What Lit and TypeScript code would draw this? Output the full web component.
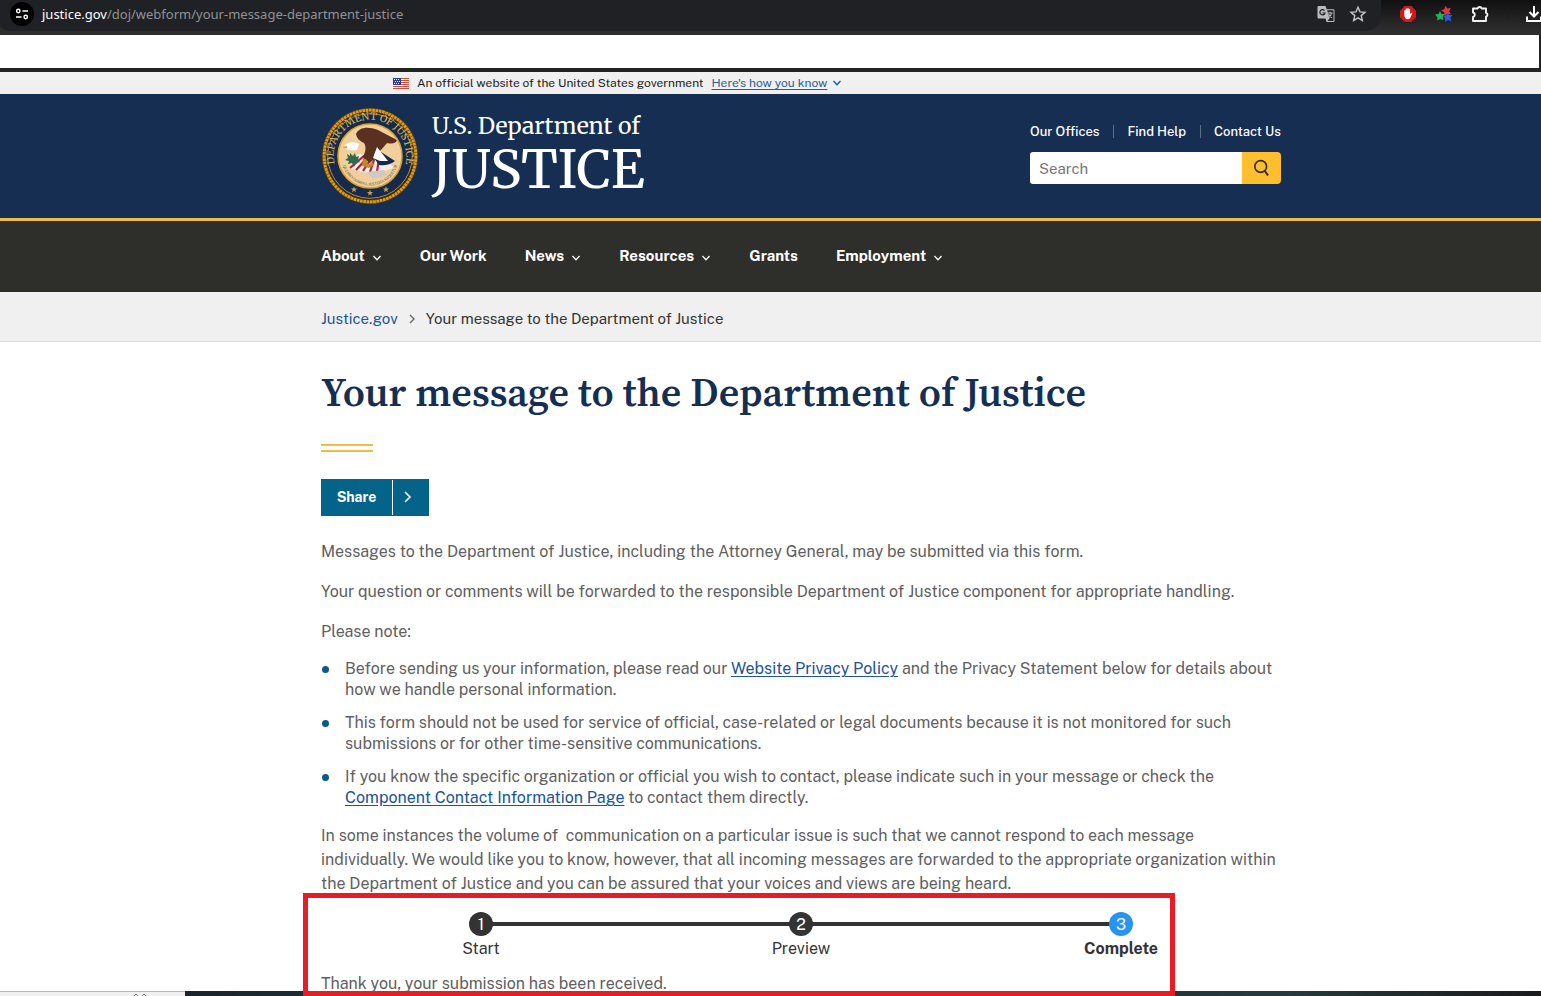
import { LitElement, html, css, svg } from "lit";
import { customElement } from "lit/decorators.js";

const chevronDown = html`<svg class="chev" width="10" height="8" viewBox="0 0 10 8" aria-hidden="true">
  <path d="M1.5 2 5 5.7 8.5 2" fill="none" stroke="currentColor" stroke-width="1.3" /></svg>`;

@customElement("browser-bar")
export class BrowserBar extends LitElement {
  static styles = css`
    :host {
      display: flex;
      height: 35px;
      background: linear-gradient(#101010, #2e2e2f 90%);
      font-family: "Noto Sans", sans-serif;
      font-size: 13px;
      overflow: hidden;
    }
    .omnibox {
      flex: 1;
      display: flex;
      align-items: center;
      height: 27px;
      padding: 0 14px 4px 10px;
      margin-left: -2px;
      background: #202124;
      border-radius: 0 0 16px 12px;
      color: #8f9296;
      white-space: nowrap;
    }
    .site {
      width: 24px;
      height: 24px;
      border-radius: 50%;
      background: #000;
      margin: 0 8px 0 2px;
    }
    .url { flex: 1; }
    .url b { color: #fff; font-weight: 400; }
    .omnibox svg { flex: none; }
    .tools { display: flex; gap: 14px; }
    .extensions {
      flex: none;
      display: flex;
      align-items: center;
      gap: 18px;
      height: 28px;
      width: 142px;
      padding-left: 18px;
    }
    .extensions svg { flex: none; }
    .rule { flex: none; width: 1px; height: 10px; background: #1b1b1b; margin-right: -1px; }
  `;
  render() {
    return html`
      <div class="omnibox">
        <svg class="site" viewBox="0 0 24 24" fill="none" stroke="#fff" stroke-width="1.4">
          <circle cx="8.3" cy="9" r="1.7" /><path d="M12.5 9H18M6 15h5.5" /><circle cx="15.7" cy="15" r="1.7" />
        </svg>
        <span class="url"><b>justice.gov</b>/doj/webform/your-message-department-justice</span>
        <span class="tools">
          <svg width="18" height="18" viewBox="0 0 18 18">
            <path d="M1.5 1h7l1.2 3.3h6.8a1 1 0 0 1 1 1V16a1 1 0 0 1-1 1H9.6L8.5 13.6h-7a1 1 0 0 1-1-1V2a1 1 0 0 1 1-1z" fill="#b9bbbe" />
            <path d="M10.2 5.3h6.3v10.6h-6l2-2.4z" fill="#202124" />
            <path d="M7.5 5.6A2.6 2.6 0 1 0 8 8H5.6" fill="none" stroke="#202124" stroke-width="1.2" />
            <path d="M10.5 8h5.2M13 6.8V8M11.3 12.8c2-1.2 3-2.8 3.2-4.7M11.5 9.3c.7 1.5 1.9 2.6 3.6 3.4" fill="none" stroke="#b9bbbe" stroke-width="1.1" />
          </svg>
          <svg width="18" height="18" viewBox="0 0 18 18">
            <path d="M9 2.3l2 4.6 5 .4-3.8 3.3 1.15 4.9L9 12.9l-4.35 2.6L5.8 10.6 2 7.3l5-.4z" fill="none" stroke="#c4c6c9" stroke-width="1.4" />
          </svg>
        </span>
      </div>
      <div class="extensions">
        <svg width="18" height="18" viewBox="0 0 18 18">
          <path d="M5.7 1h6.6L17 5.7v6.6L12.3 17H5.7L1 12.3V5.700z" fill="#d3181c" />
          <path d="M5.3 9.500V5.600a.7.7 0 0 1 1.400 0V4.200a.7.7 0 0 1 1.500 0v-.5a.7.7 0 0 1 1.500 0v.7a.7.7 0 0 1 1.400 0v5l1-1.300c.5-.6 1.400-.1 1.100.5l-1.700 3.700c-.5 1.300-1.200 2-2.600 2-2.600 0-3.600-1.800-3.600-4.800z" fill="#fff" />
        </svg>
        <svg width="18" height="18" viewBox="0 0 18 18">
          <path d="M10.500 .5l1.700 2.900 3.600-.3-1.600 3.100 1.700 3.100-3.700-.6L9.500 10.700l-.4-3.400L6 5.400l3.400-1.300z" fill="#e0334c" />
          <path d="M5 6l1.500 2.900 3.300.1-2.100 2.700.9 3.400-3.300-1.200-3.100 1.700.2-3.400L0 9.600l3.500-.6z" fill="#1fb257" />
          <path d="M12.700 7.200l1.400 2.800 3.300.1-2 2.700 1 3.600-3.300-1.300-3.100 1.900.2-3.600L8 10.900l3.400-.6z" fill="#3557e0" />
        </svg>
        <svg width="18" height="18" viewBox="0 0 18 18">
          <path d="M2 3.500h4.700a2 2 0 0 1 3.900 0H15v4.400a1.900 1.900 0 0 1 0 3.700V16H2v-4a2.300 2.300 0 0 0 0-4.500z" fill="none" stroke="#f2f2f2" stroke-width="1.900" stroke-linejoin="round" />
        </svg>
        <span class="rule"></span>
        <svg width="18" height="18" viewBox="0 0 18 18">
          <path d="M9 1v10M4.500 7L9 11.500 13.500 7M2 11.500V16h14v-4.500" fill="none" stroke="#fff" stroke-width="2" />
        </svg>
      </div>`;
  }
}

@customElement("doj-seal")
export class DojSeal extends LitElement {
  static styles = css`
    :host { display: block; width: 96px; height: 96px; }
    .ring { font: 10px "Merriweather", "Liberation Serif", serif; fill: #d9b45c; }
    .motto { font: 4px "Liberation Serif", serif; fill: #4d4433; }
  `;
  render() {
    return html`<svg width="96" height="96" viewBox="0 0 96 96" role="img" aria-label="Department of Justice seal">
      <defs>
        <path id="top" d="M14.700 62.500A36.300 36.300 0 1 1 81.300 62.500" />
        <path id="bottom" d="M19.500 49A28.500 28.500 0 0 0 76.500 49" />
        <clipPath id="disc"><circle cx="48" cy="48" r="31" /></clipPath>
      </defs>
      <circle cx="48" cy="48" r="48" fill="#6b4310" />
      <circle cx="48" cy="48" r="45.800" fill="none" stroke="#d99c1e" stroke-width="3" stroke-dasharray="2.600 .7" />
      <circle cx="48" cy="48" r="43.500" fill="#152a4c" stroke="#3a2a14" stroke-width="1.500" />
      <circle cx="48" cy="48" r="42.300" fill="none" stroke="#c9962d" stroke-width=".9" />
      <circle cx="48" cy="48" r="32" fill="#f0cf9c" stroke="#dba32c" stroke-width="1.600" />
      <text class="ring"><textPath href="#top" startOffset="50%" text-anchor="middle">DEPARTMENT OF JUSTICE</textPath></text>
      <g clip-path="url(#disc)">
        <path d="M27 60l9-14 26 2 10 12-14 4-14 1z" fill="#f4eee8" />
        <path d="M28 60l15-13M34 62l13-14M41 63l9-14M48 64l5-15M55 64l2-14" stroke="#b5203c" stroke-width="2.200" />
        <path d="M50 47l9-3 14 9c-5 4-11 5-16 4z" fill="#162a50" />
        <path d="M44 64l7 7 14-4-3-5z" fill="#cfc9c4" />
        <path d="M34 26c3-7 12-8 22-4l19 10c-1 4-6 4-10 3-4 5-8 8-9 12l-8 8-7-5c2-6 4-10 1-15-4-2-7-4-8-9z" fill="#5c3020" />
        <path d="M51 50l4-11 11 14-8 0z" fill="#fff" />
        <path d="M22 38c3-4 10-5 15-2l-2 6c-4 1-8 0-11-1z" fill="#fff" />
        <path d="M20.500 39.500l4-2 1 3z" fill="#e3a62b" />
        <path d="M25 46l3 2 0-3 3 3 2-3 1 4 3-1-1 4 2 2-4 1-2 4-2-4-4 1 1-3-4-1 3-2z" fill="#2e6b4d" />
        <path d="M41 50l4 2 1 5 4-3 2 3-5 3-7-2z" fill="#c98525" />
      </g>
      <text class="motto"><textPath href="#bottom" startOffset="50%" text-anchor="middle">QUI PRO DOMINA JUSTITIA SEQUITUR</textPath></text>
      ${[[32, 81.5], [48, 85], [64, 81.5]].map(([x, y]) => svg`<path
        transform="translate(${x} ${y})" fill="#c9a050"
        d="M0-3.200.8-1 3.100-1 1.300.4 2 2.700 0 1.300-2 2.700-1.300.4-3.100-1-.8-1z" />`)}
    </svg>`;
  }
}

@customElement("app-root")
export class AppRoot extends LitElement {
  static styles = css`
    :host {
      --navy: #162e51;
      --gold: #ffbe2e;
      --link: #205493;
      display: block;
      position: relative;
      height: 100vh;
      overflow: hidden;
      background: #fff;
      color: #606060;
      font: 16px/24px "Public Sans", "Noto Sans CJK JP", "Liberation Sans", sans-serif;
    }
    a { color: var(--link); }
    .wrap { padding-left: 321px; padding-right: 260px; }
    .bookmarks { height: 33px; background: #fff; border-right: 2px solid #232323; border-bottom: 4px solid #232323; }
    .banner {
      display: flex;
      align-items: center;
      height: 22px;
      padding-left: 393px;
      background: #f0f0f0;
      color: #1b1b1b;
      font-size: 12px;
      line-height: 22px;
    }
    .banner span { margin: 0 8px; }
    .banner .chev { margin-left: 5px; color: #005ea2; }
    .banner button {
      display: flex;
      align-items: center;
      padding: 0;
      border: 0;
      background: none;
      color: #2a5f8f;
      font: inherit;
    }
    .banner u { text-underline-offset: 2px; }
    .header {
      display: flex;
      justify-content: space-between;
      height: 124px;
      background: var(--navy);
      border-bottom: 3px solid #efbb49;
      color: #fff;
    }
    .brand {
      display: flex;
      gap: 14px;
      padding: 14px 0 0 1px;
      color: #fff;
      text-decoration: none;
      font-family: "Merriweather", "Noto Serif", serif;
    }
    .brand small { display: block; font-size: 23px; line-height: 36px; }
    .brand strong { display: block; font-size: 53px; line-height: 50px; font-weight: 400; }
    .side { width: 251px; padding-top: 29px; }
    .links { display: flex; justify-content: space-between; font-size: 13px; line-height: 17px; font-weight: 500; }
    .links a { color: #fff; text-decoration: none; white-space: nowrap; }
    .links i { width: 1px; height: 13px; margin-top: 2px; background: #5c6d85; }
    .search { display: flex; height: 32px; margin-top: 12px; }
    .search input {
      flex: 1;
      min-width: 0;
      border: 0;
      border-radius: 3px 0 0 3px;
      padding: 0 9px;
      font: 15px "Public Sans", "Liberation Sans", sans-serif;
    }
    .search input::placeholder { color: #757575; }
    .search button {
      width: 39px;
      padding: 0;
      border: 0;
      border-radius: 0 4px 4px 0;
      background: var(--gold);
    }
    .search svg { display: block; margin: 0 auto; }
    .nav { display: flex; gap: 38px; height: 71px; background: #2e2e2a; }
    .nav a {
      display: flex;
      align-items: center;
      gap: 7px;
      height: 70px;
      color: #fff;
      text-decoration: none;
      white-space: nowrap;
      font-size: 15px;
      font-weight: 700;
    }
    .nav .chev { margin-top: 4px; }
    .crumbs {
      display: flex;
      align-items: center;
      gap: 10px;
      height: 49px;
      padding-top: 4px;
      box-sizing: border-box;
      background: #f0f0f0;
      color: #333;
      font-size: 15px;
    }
    .crumbs a { text-decoration: none; }
    .edge { height: 1px; background: #dcdee0; }
    h1 {
      margin: 0;
      padding-top: 24px;
      color: var(--navy);
      font: 600 40px/52px "Source Serif 4", "Noto Serif", serif;
    }
    .accent { width: 52px; height: 4px; margin: 26px 0 27px; border: solid #efbb49; border-width: 2px 0; }
    .share {
      display: flex;
      height: 37px;
      padding: 1px 0;
      border: 0;
      background: #046389;
      color: #fff;
      font: 700 14px/35px "Public Sans", "Liberation Sans", sans-serif;
    }
    .share span { width: 71px; border-right: 1px solid #fff; }
    .share svg { margin: 10px 13px 0 7px; width: 16px; }
    p { margin: 0 0 16px; }
    .share + p { margin-top: 24px; }
    ul { margin: -2px 0 4px; padding: 0; list-style: none; line-height: 21px; }
    li { display: flex; padding-bottom: 12px; }
    ul li::before {
      content: "";
      flex: none;
      width: 7px;
      height: 7px;
      margin: 8px 16px 0 1px;
      border-radius: 50%;
      background: #0b5a85;
    }
    ul a { text-underline-offset: 2px; }
    .final { margin: 0; }
    .progress { position: relative; padding-top: 16px; }
    .progress::after {
      content: "";
      position: absolute;
      z-index: 2;
      inset: -3px 106px auto -18px;
      height: 93px;
      border: 5px solid #e81c24;
    }
    ol { display: grid; grid-template-columns: repeat(3, 1fr); margin: 0 0 10px; padding: 0; list-style: none; }
    ol li { display: grid; justify-items: center; padding: 0; color: #333; line-height: 26px; }
    ol b {
      z-index: 1;
      grid-area: 1 / 1;
      width: 24px;
      height: 24px;
      border-radius: 50%;
      background: #333;
      color: #fff;
      font-weight: 400;
      line-height: 25px;
      text-align: center;
    }
    .line { grid-area: 1 / 1; align-self: center; width: 100%; height: 4px; background: #333; }
    .start .line { width: 50%; justify-self: end; }
    .done .line { width: 50%; justify-self: start; }
    .done { font-weight: 700; }
    .done b { background: #2694f0; }
    .taskbar {
      position: absolute;
      inset: auto 0 0 0;
      z-index: 1;
      display: flex;
      height: 5px;
      background: linear-gradient(90deg, #17191c, #1c2c33 20%, #1d2023 45%, #263a3d 83%, #1a1a1c);
    }
    .status { width: 185px; height: 4px; border-top: 1px solid #b8b8b8; background: #f0f0f0; }
    .status svg { display: block; margin-left: 133px; }
  `;

  private menu = [
    { label: "About", sub: true },
    { label: "Our Work", sub: false },
    { label: "News", sub: true },
    { label: "Resources", sub: true },
    { label: "Grants", sub: false },
    { label: "Employment", sub: true },
  ];
  private steps = [
    { label: "Start", state: "start" },
    { label: "Preview", state: "" },
    { label: "Complete", state: "done" },
  ];

  render() {
    return html`
      <browser-bar></browser-bar>
      <div class="bookmarks"></div>
      <div class="banner">
        <svg width="16" height="11" viewBox="0 0 16 11">
          <path fill="#fff" d="M0 0h16v11H0z" />
          <path stroke="#c8503c" d="M0 .5h16M0 2.500h16M0 4.500h16M0 6.500h16M0 8.500h16M0 10.500h16" />
          <path fill="#2a3a98" d="M0 0h8v7H0z" />
          <path stroke="#fff" stroke-dasharray="1 1" d="M1 1.500h6M2 3.500h5M1 5.500h6" />
        </svg>
        <span>An official website of the United States government</span>
        <button><u>Here's how you know</u>${chevronDown}</button>
      </div>
      <header class="header wrap">
        <a class="brand" href="#">
          <doj-seal></doj-seal>
          <div><small>U.S. Department of</small><strong>JUSTICE</strong></div>
        </a>
        <div class="side">
          <div class="links">
            <a href="#">Our Offices</a><i></i><a href="#">Find Help</a><i></i><a href="#">Contact Us</a>
          </div>
          <form class="search">
            <input type="search" placeholder="Search" aria-label="Search" />
            <button type="button" aria-label="Submit search">
              <svg width="18" height="18" viewBox="0 0 18 18" fill="none" stroke="#2e2e2a">
                <circle cx="7.700" cy="7.500" r="5.900" stroke-width="1.600" /><path d="M11.500 11.500l3.500 5" stroke-width="2" />
              </svg>
            </button>
          </form>
        </div>
      </header>
      <nav class="nav wrap">
        ${this.menu.map((m) => html`<a href="#">${m.label}${m.sub ? chevronDown : ""}</a>`)}
      </nav>
      <nav class="crumbs wrap" aria-label="Breadcrumb">
        <a href="#">Justice.gov</a>
        <svg width="8" height="10" viewBox="0 0 8 10"><path d="M2 1l4 4-4 4" fill="none" stroke="#666" stroke-width="1.400" /></svg>
        <span>Your message to the Department of Justice</span>
      </nav>
      <div class="edge"></div>
      <main class="wrap">
        <h1>Your message to the Department of Justice</h1>
        <div class="accent"></div>
        <button class="share">
          <span>Share</span>
          <svg height="14" viewBox="0 0 16 14"><path d="M5 2l5 5-5 5" fill="none" stroke="#fff" stroke-width="1.600" /></svg>
        </button>
        <p>Messages to the Department of Justice, including the Attorney General, may be submitted via this form.</p>
        <p>Your question or comments will be forwarded to the responsible Department of Justice component for appropriate handling.</p>
        <p>Please note:</p>
        <ul>
          <li><div>Before sending us your information, please read our <a href="#">Website Privacy Policy</a> and the Privacy Statement below for details about how we handle personal information.</div></li>
          <li><div>This form should not be used for service of official, case-related or legal documents because it is not monitored for such submissions or for other time-sensitive communications.</div></li>
          <li><div>If you know the specific organization or official you wish to contact, please indicate such in your message or check the <a href="#">Component Contact Information Page</a> to contact them directly.</div></li>
        </ul>
        <p class="final">In some instances the volume of&nbsp; communication on a particular issue is such that we cannot respond to each message individually. We would like you to know, however, that all incoming messages are forwarded to the appropriate organization within the Department of Justice and you can be assured that your voices and views are being heard.</p>
        <section class="progress">
          <ol>
            ${this.steps.map((s, i) => html`<li class=${s.state}><i class="line"></i><b>${i + 1}</b><span>${s.label}</span></li>`)}
          </ol>
          <p>Thank you, your submission has been received.</p>
        </section>
      </main>
      <div class="taskbar">
        <div class="status">
          <svg width="14" height="4" viewBox="0 0 14 4"><path d="M1 4l2-2 2 2M9 4l2-2 2 2" fill="none" stroke="#777" /></svg>
        </div>
      </div>`;
  }
}
